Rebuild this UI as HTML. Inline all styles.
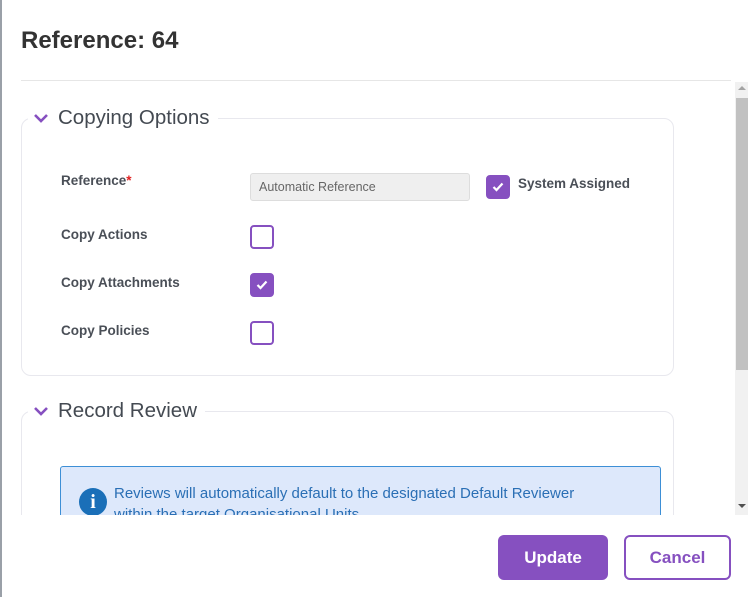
<!DOCTYPE html>
<html><head><meta charset="utf-8"><style>
*{box-sizing:border-box;margin:0;padding:0}
body{width:748px;height:597px;overflow:hidden;background:#fff;font-family:"Liberation Sans",sans-serif;position:relative;color:#3d4451}
.a{position:absolute}
.lbl{font-size:13.5px;font-weight:bold;color:#4a4f57}
.cb{width:24px;height:24px;border:2px solid #8650c0;border-radius:4px;background:#fff}
.cb.on{background:#8650c0;display:flex;align-items:center;justify-content:center}
.sec{font-size:20.5px;color:#444a52}
</style></head><body>
<div class="a" style="left:0;top:0;width:2px;height:597px;background:#9aa0a8"></div>
<div class="a" style="left:21px;top:27px;font-size:24px;font-weight:bold;color:#333">Reference: 64</div>
<div class="a" style="left:21px;top:80px;width:710px;height:1px;background:#e6e6e6"></div>
<div class="a" style="left:0;top:81px;width:735px;height:434px;overflow:hidden">
 <div class="a" style="left:21px;top:37px;width:653px;height:258px;border:1px solid #e8e8ee;border-radius:10px"></div>
 <div class="a" style="left:28px;top:25px;background:#fff;padding:0 8px 0 4px;display:flex;align-items:center">
  <svg width="18" height="12" viewBox="0 0 18 12"><path d="M3 3l6 6 6-6" stroke="#8650c0" stroke-width="2.6" fill="none"/></svg>
  <span class="sec" style="margin-left:8px">Copying Options</span></div>
 <div class="a lbl" style="left:61px;top:92px">Reference<span style="color:#e02020">*</span></div>
 <div class="a" style="left:250px;top:92px;width:220px;height:28px;background:#efefef;border:1px solid #ddd;border-radius:3px;font-size:12.5px;color:#666;padding:6px 8px">Automatic Reference</div>
 <div class="a cb on" style="left:486px;top:94px"><svg width="12" height="10" viewBox="0 0 12 10"><path d="M1.5 5l3 3 6-6.5" stroke="#fff" stroke-width="2.2" fill="none"/></svg></div>
 <div class="a lbl" style="left:518px;top:95px">System Assigned</div>
 <div class="a lbl" style="left:61px;top:146px">Copy Actions</div>
 <div class="a cb" style="left:250px;top:144px"></div>
 <div class="a lbl" style="left:61px;top:194px">Copy Attachments</div>
 <div class="a cb on" style="left:250px;top:192px"><svg width="12" height="10" viewBox="0 0 12 10"><path d="M1.5 5l3 3 6-6.5" stroke="#fff" stroke-width="2.2" fill="none"/></svg></div>
 <div class="a lbl" style="left:61px;top:242px">Copy Policies</div>
 <div class="a cb" style="left:250px;top:240px"></div>
 <div class="a" style="left:21px;top:330px;width:653px;height:200px;border:1px solid #e8e8ee;border-radius:10px"></div>
 <div class="a" style="left:28px;top:318px;background:#fff;padding:0 8px 0 4px;display:flex;align-items:center">
  <svg width="18" height="12" viewBox="0 0 18 12"><path d="M3 3l6 6 6-6" stroke="#8650c0" stroke-width="2.6" fill="none"/></svg>
  <span class="sec" style="margin-left:8px">Record Review</span></div>
 <div class="a" style="left:60px;top:385px;width:601px;height:80px;background:#dde8fb;border:1px solid #3d8fd6;border-radius:3px"></div>
 <div class="a" style="left:79px;top:407px;width:28px;height:28px;border-radius:50%;background:#1a6fb8;color:#fff;font-weight:bold;font-family:'Liberation Serif',serif;font-size:20px;text-align:center;line-height:28px">i</div>
 <div class="a" style="left:114px;top:402px;font-size:15px;color:#2a6fb5;line-height:21px;width:488px">Reviews will automatically default to the designated Default Reviewer within the target Organisational Units</div>
</div>
<div class="a" style="left:735px;top:82px;width:13px;height:433px;background:#f1f1f1"></div>
<div class="a" style="left:736px;top:98px;width:12px;height:272px;background:#c1c1c1"></div>
<div class="a" style="left:738px;top:86px;width:0;height:0;border:4px solid transparent;border-bottom-color:#a3a3a3;border-top:0"></div>
<div class="a" style="left:738px;top:504px;width:0;height:0;border:4px solid transparent;border-top-color:#505050;border-bottom:0"></div>
<div class="a" style="left:498px;top:535px;width:110px;height:45px;background:#8650c0;border-radius:6px;color:#fff;font-weight:bold;font-size:17px;text-align:center;line-height:45px">Update</div>
<div class="a" style="left:624px;top:535px;width:107px;height:45px;border:2px solid #8650c0;border-radius:6px;color:#8650c0;font-weight:bold;font-size:17px;text-align:center;line-height:41px">Cancel</div>
</body></html>
